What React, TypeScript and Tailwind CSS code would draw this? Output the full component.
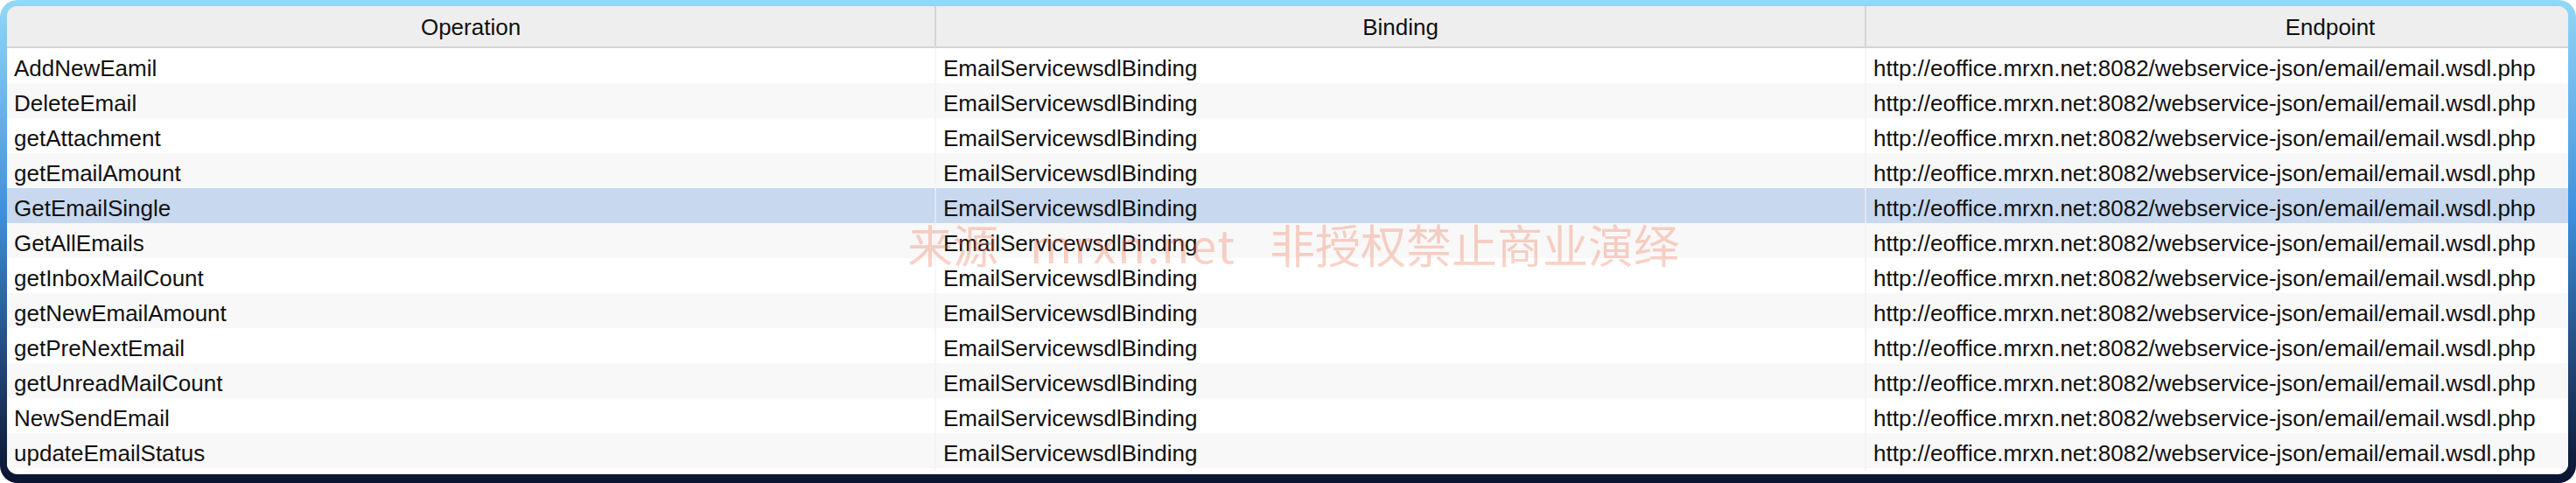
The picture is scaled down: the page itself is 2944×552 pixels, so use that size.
import React from 'react';

const operations = [
  'AddNewEamil',
  'DeleteEmail',
  'getAttachment',
  'getEmailAmount',
  'GetEmailSingle',
  'GetAllEmails',
  'getInboxMailCount',
  'getNewEmailAmount',
  'getPreNextEmail',
  'getUnreadMailCount',
  'NewSendEmail',
  'updateEmailStatus',
];

const BINDING = 'EmailServicewsdlBinding';
const ENDPOINT = 'http://eoffice.mrxn.net:8082/webservice-json/email/email.wsdl.php';
const SELECTED = 4;

const App: React.FC = () => {
  return (
    <div className="w-[2944px] h-[552px] bg-white font-['Liberation_Sans',Arial,sans-serif] text-[26px] text-[#111]">
      {/* Window frame */}
      <div className="w-full h-full rounded-[20px] bg-linear-to-b from-[#93d8f7] via-[#3c8edb] via-45% to-[#0b1430] pl-[8px] pt-[7px] pr-[9px] pb-[10px]">
        <div className="relative w-full h-full bg-white rounded-[12px] overflow-hidden">
          {/* Header */}
          <div className="grid grid-cols-[1060px_1063px_1062px] h-[48px] bg-[#eeeeee] border-b-2 border-[#d4d4d4]">
            <div className="flex items-center justify-center pt-[3px]">Operation</div>
            <div className="flex items-center justify-center pt-[3px] border-l-2 border-[#d6d6d6]">Binding</div>
            <div className="flex items-center justify-center pt-[3px] border-l-2 border-[#d6d6d6]">Endpoint</div>
          </div>

          {/* Rows */}
          {operations.map((op, i) => (
            <div
              key={op}
              className={`grid grid-cols-[1060px_1063px_1062px] h-[40px] ${
                i === SELECTED ? 'bg-[#c7d8ef]' : i % 2 === 1 ? 'bg-[#f8f8f8]' : 'bg-white'
              }`}
            >
              <div className="flex items-center pl-2 pt-[4px] whitespace-nowrap">{op}</div>
              <div className="flex items-center pl-2 pt-[4px] whitespace-nowrap border-l-2 border-[#f2f2f2]/60">{BINDING}</div>
              <div className="flex items-center pl-2 pt-[4px] whitespace-nowrap border-l-2 border-[#f2f2f2]/60">{ENDPOINT}</div>
            </div>
          ))}

          {/* Watermark */}
          <div className="absolute left-[1029px] top-[246px] flex items-center leading-none text-[52px] text-[#ee6a45]/30 font-['Noto_Sans_CJK_SC','Noto_Sans',sans-serif] pointer-events-none whitespace-nowrap">
            <span>来源</span>
            <span className="ml-[36px] tracking-[2px]">mrxn.net</span>
            <span className="ml-[38px]">非授权禁止商业演绎</span>
          </div>
        </div>
      </div>
    </div>
  );
};

export default App;
